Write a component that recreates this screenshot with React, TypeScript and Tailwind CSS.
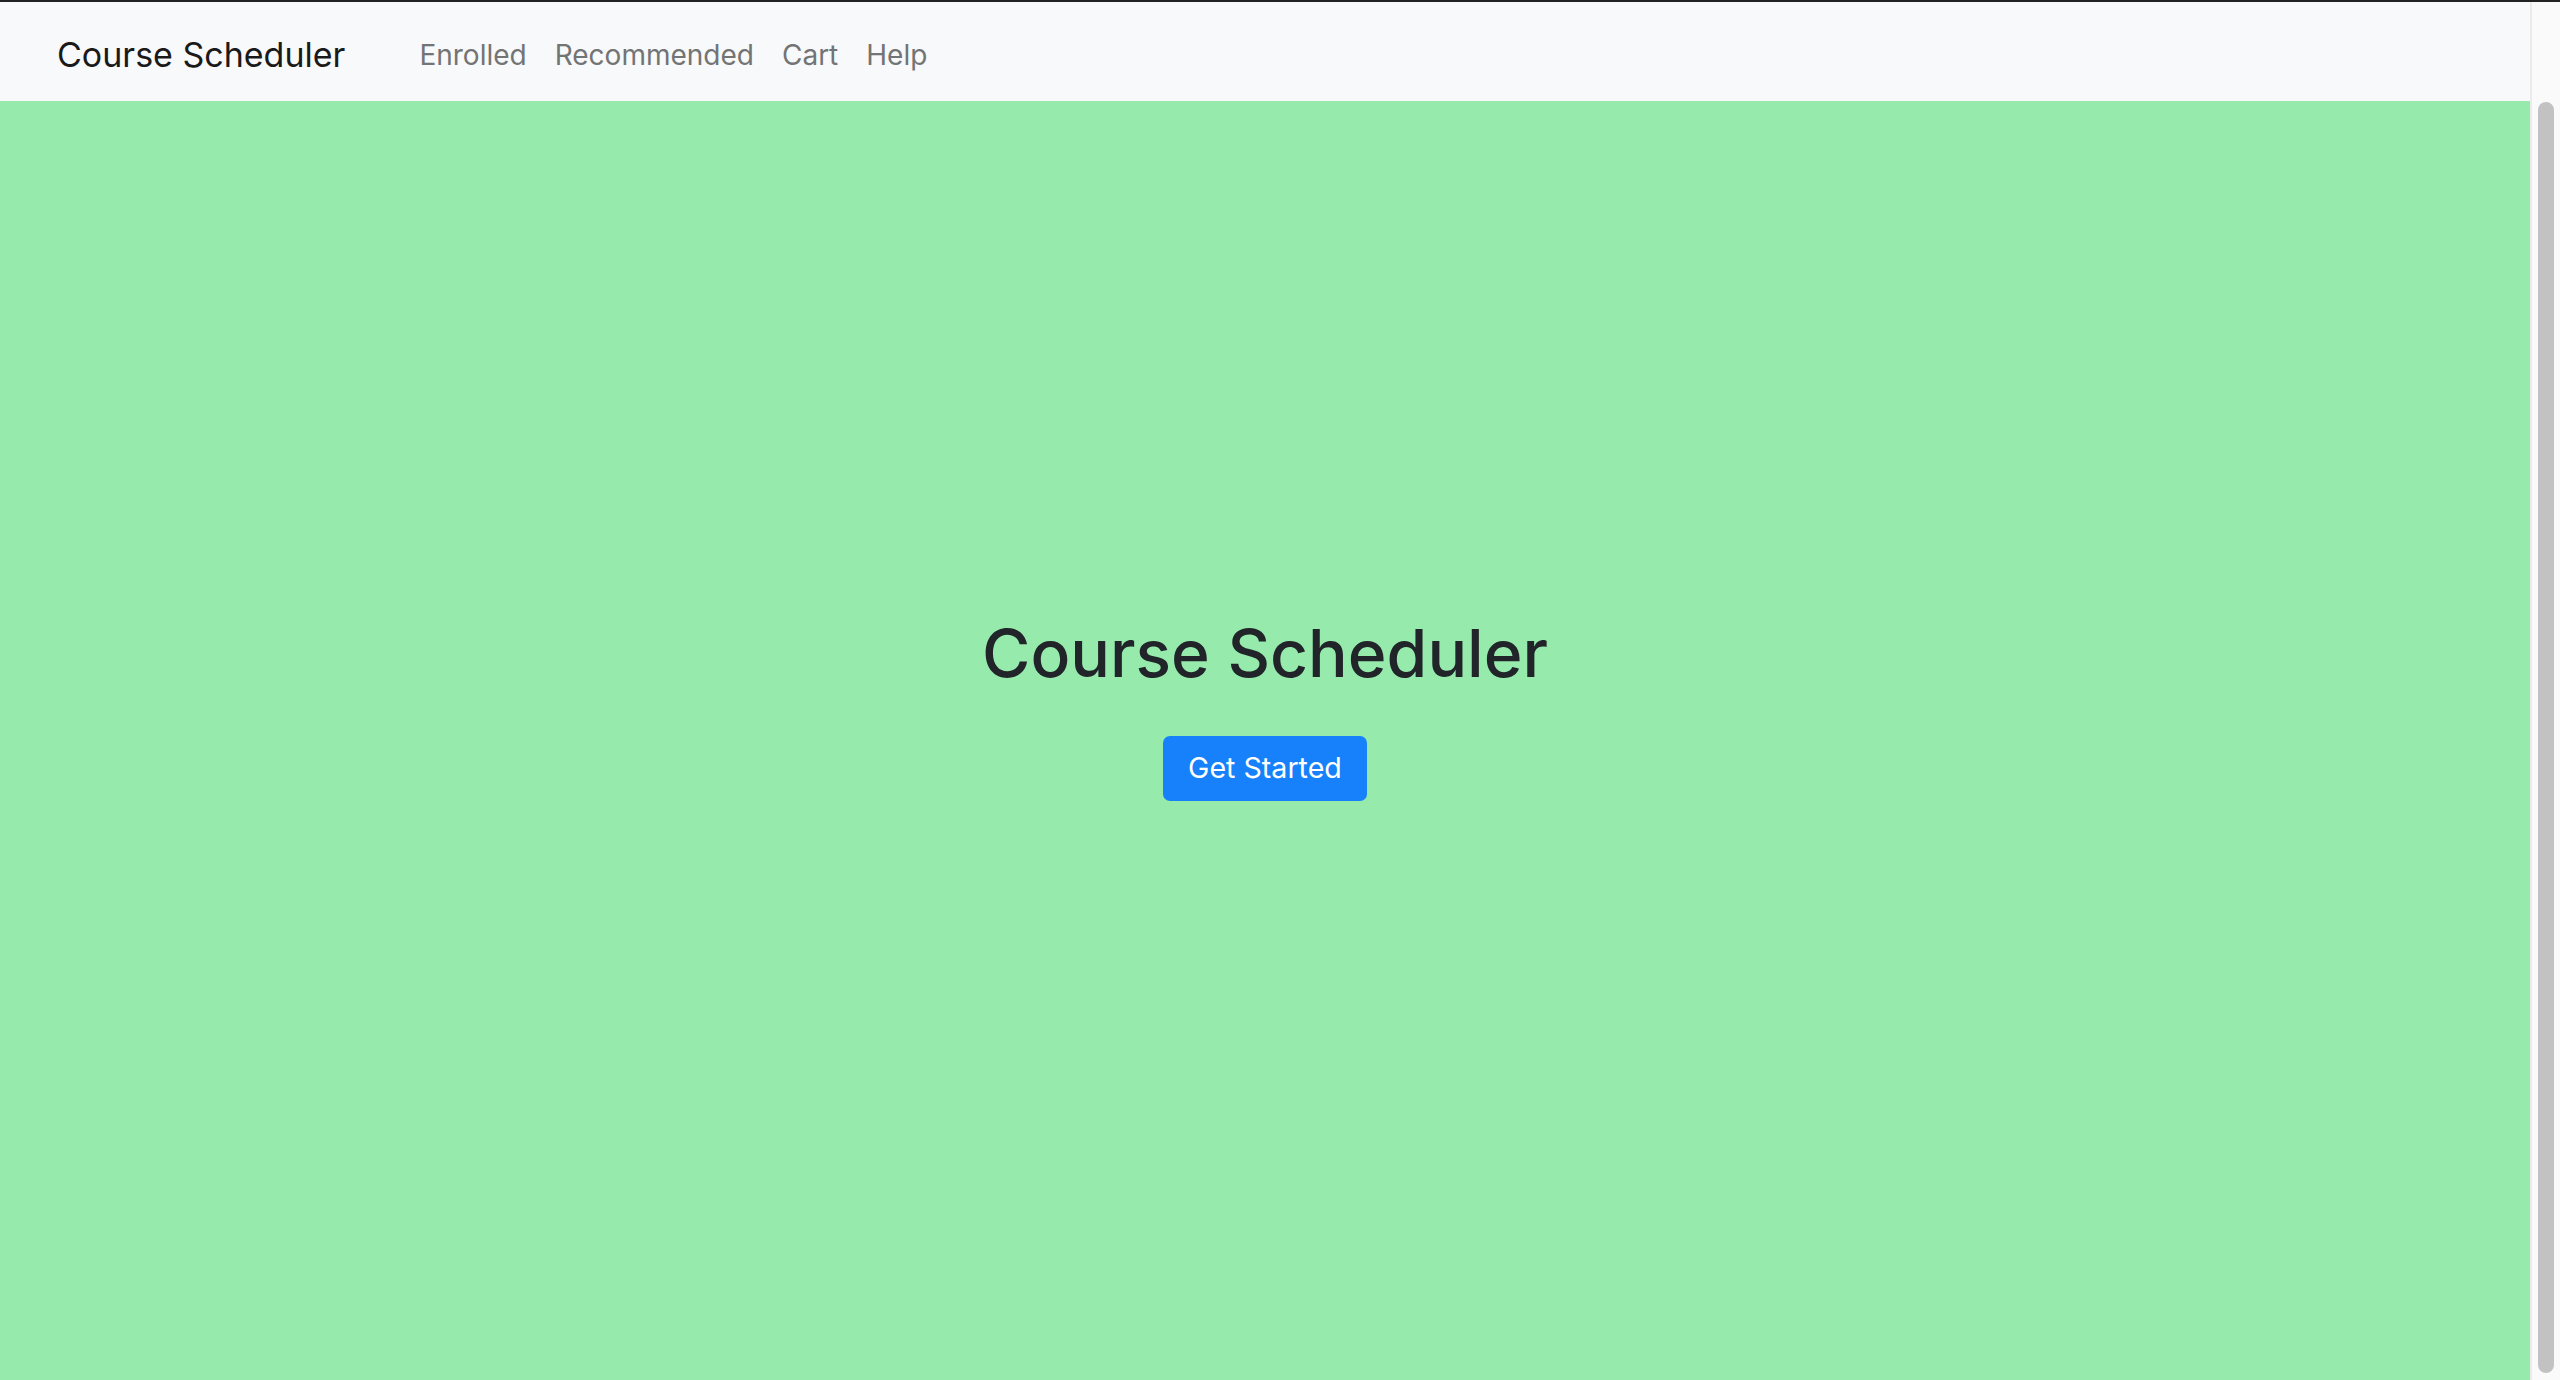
import { FC } from "react";

const navLinks = ["Enrolled", "Recommended", "Cart", "Help"];

const Navbar: FC = () => (
  <nav className="h-[99px] w-full bg-[#f8f9fa] flex items-center pl-[57px] pt-[6px]">
    <a className="text-[34px] text-[#1a1a1a] leading-none mr-[60px]">Course Scheduler</a>
    <div className="flex items-center">
      {navLinks.map((link) => (
        <a key={link} className="text-[28px] text-[#737475] leading-none px-[14px]">
          {link}
        </a>
      ))}
    </div>
  </nav>
);

const Hero: FC = () => (
  <main className="flex-1 bg-[#95eaac] flex flex-col items-center pt-[513px]">
    <h1 className="text-[66px] leading-[1.2] text-[#212529] font-medium">Course Scheduler</h1>
    <button className="mt-[43px] h-[65px] px-[25px] rounded-[7px] bg-[#1781fb] text-white text-[28.6px] leading-none">
      Get Started
    </button>
  </main>
);

const Scrollbar: FC = () => (
  <div className="w-[30px] border-l-2 border-[#ebebeb] bg-[#fafafa] pt-[100px] pb-[7px] pl-[6px] pr-[6px] flex">
    <div className="w-[16px] flex-1 rounded-full bg-[#c2c2c2]" />
  </div>
);

const App: FC = () => {
  return (
    <div
      className="h-[1380px] w-[2560px] flex flex-col overflow-hidden border-t-2 border-[#222222]"
      style={{ fontFamily: "Inter, 'Noto Sans', sans-serif" }}
    >
      <div className="flex flex-1">
        <div className="flex-1 flex flex-col">
          <Navbar />
          <Hero />
        </div>
        <Scrollbar />
      </div>
    </div>
  );
};

export default App;
